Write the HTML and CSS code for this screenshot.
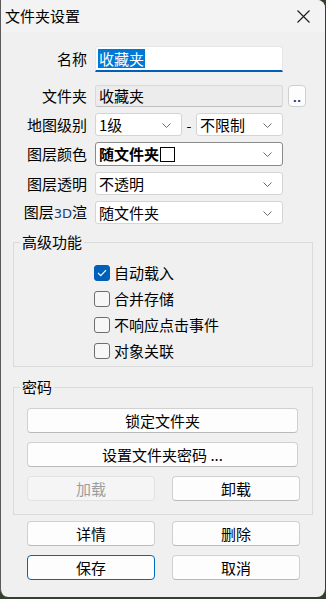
FILE: index.html
```html
<!DOCTYPE html>
<html lang="zh-CN">
<head>
    <meta charset="UTF-8">
    <title>文件夹设置</title>
    <link rel="stylesheet" href="styles.css">
</head>
<body>
    <div class="window">
        <div class="titlebar">
            <span class="title">文件夹设置</span>
            <svg class="close" width="13" height="13" viewBox="0 0 13 13"><path d="M0.5 0.5 L12.5 12.5 M12.5 0.5 L0.5 12.5" stroke="#1a1a1a" stroke-width="1.1" fill="none"/></svg>
        </div>
        <div class="content">
            <div class="form">
                <div class="row row-name">
                    <span class="lbl">名称</span>
                    <div class="field field-edit"><span class="selected">收藏夹</span></div>
                </div>
                <div class="row row-folder">
                    <span class="lbl">文件夹</span>
                    <div class="field field-readonly">收藏夹</div>
                    <button class="browse">..</button>
                </div>
                <div class="row row-combo">
                    <span class="lbl">地图级别</span>
                    <div class="combo combo-half">1级<svg class="chev" width="9" height="5" viewBox="0 0 9 5"><path d="M0.5 0.5 L4.5 4.5 L8.5 0.5" stroke="#6a6a6a" fill="none"/></svg></div>
                    <span class="dash">-</span>
                    <div class="combo combo-half">不限制<svg class="chev" width="9" height="5" viewBox="0 0 9 5"><path d="M0.5 0.5 L4.5 4.5 L8.5 0.5" stroke="#6a6a6a" fill="none"/></svg></div>
                </div>
                <div class="row row-color">
                    <span class="lbl">图层颜色</span>
                    <div class="combo combo-focus"><b>随文件夹</b><span class="swatch"></span><svg class="chev" width="9" height="5" viewBox="0 0 9 5"><path d="M0.5 0.5 L4.5 4.5 L8.5 0.5" stroke="#6a6a6a" fill="none"/></svg></div>
                </div>
                <div class="row row-combo">
                    <span class="lbl">图层透明</span>
                    <div class="combo">不透明<svg class="chev" width="9" height="5" viewBox="0 0 9 5"><path d="M0.5 0.5 L4.5 4.5 L8.5 0.5" stroke="#6a6a6a" fill="none"/></svg></div>
                </div>
                <div class="row row-combo">
                    <span class="lbl">图层<span class="latin">3D</span>渲</span>
                    <div class="combo">随文件夹<svg class="chev" width="9" height="5" viewBox="0 0 9 5"><path d="M0.5 0.5 L4.5 4.5 L8.5 0.5" stroke="#6a6a6a" fill="none"/></svg></div>
                </div>
            </div>

            <fieldset class="group group-advanced">
                <legend>高级功能</legend>
                <div class="checks">
                    <div class="check"><span class="box box-on"><svg width="10" height="8" viewBox="0 0 10 8"><path d="M1 4 L3.8 6.6 L9 1.2" stroke="#fff" stroke-width="1.2" fill="none"/></svg></span>自动载入</div>
                    <div class="check"><span class="box"></span>合并存储</div>
                    <div class="check"><span class="box"></span>不响应点击事件</div>
                    <div class="check"><span class="box"></span>对象关联</div>
                </div>
            </fieldset>

            <fieldset class="group group-password">
                <legend>密码</legend>
                <div class="stack">
                    <button class="btn btn-wide">锁定文件夹</button>
                    <button class="btn btn-wide">设置文件夹密码 ...</button>
                    <div class="pair">
                        <button class="btn btn-disabled">加载</button>
                        <button class="btn">卸载</button>
                    </div>
                </div>
            </fieldset>

            <div class="pair pair-bottom">
                <button class="btn">详情</button>
                <button class="btn">删除</button>
            </div>
            <div class="pair pair-bottom">
                <button class="btn btn-default">保存</button>
                <button class="btn">取消</button>
            </div>
        </div>
    </div>
</body>
</html>
```

FILE: styles.css
```css
html, body {
    margin: 0;
    padding: 0;
    background-color: #33402f;
    font-family: "Noto Sans CJK SC", "Noto Sans", sans-serif;
    color: #000000;
}

.window {
    width: 325px;
    height: 597px;
    background-color: #f0f0f0;
    border-radius: 0 8px 8px 8px;
    overflow: hidden;
    box-sizing: border-box;
    border-left: 1px solid #5a5a5a;
}

.titlebar {
    height: 32px;
    background-color: #f3f3f3;
    display: flex;
    align-items: center;
    justify-content: space-between;
    padding: 0 15px 0 4px;
}

.title {
    font-size: 15px;
    line-height: 18px;
    margin-top: -1px;
}

.close {
    display: block;
    margin-top: 1px;
}

.content {
    padding: 14px 12px 0 12px;
}

/* form rows */
.form {
    display: flex;
    flex-direction: column;
    gap: 6px;
}

.row {
    display: flex;
    align-items: center;
    height: 23px;
}

.row-name { height: 26px; }
.row-folder { height: 22px; margin-top: 7px; }
.row-color { height: 24px; }

.lbl {
    width: 74px;
    padding-right: 8px;
    text-align: right;
    font-size: 15px;
    line-height: 18px;
    white-space: nowrap;
}

.latin {
    font-family: "DejaVu Sans", sans-serif;
    font-size: 13px;
    color: #1f3a7a;
}

.field, .combo {
    width: 188px;
    height: 100%;
    box-sizing: border-box;
    font-size: 15px;
    line-height: 18px;
    display: flex;
    align-items: center;
    padding-left: 3px;
}

.field-edit {
    background-color: #ffffff;
    border: 1px solid #e6e6e6;
    border-bottom: 2px solid #005fb8;
    border-radius: 3px 3px 0 0;
    padding-left: 2px;
}

.selected {
    background-color: #0078d7;
    color: #ffffff;
    padding: 0 1px;
    line-height: 19px;
}

.field-readonly {
    background-color: #ececec;
    border: 1px solid #d9d9d9;
    border-bottom-color: #bdbdbd;
    border-radius: 3px;
}

.browse {
    width: 18px;
    height: 22px;
    margin-left: 5px;
    padding: 0;
    background-color: #fdfdfd;
    border: 1px solid #cfcfcf;
    border-radius: 4px;
    font-family: "DejaVu Sans", sans-serif;
    font-size: 11px;
    font-weight: bold;
    color: #1e3f80;
    line-height: 26px;
}

.combo {
    position: relative;
    background-color: #ffffff;
    border: 1px solid #d4d4d4;
    border-radius: 3px;
}

.combo-half {
    width: 87px;
}

.combo-focus {
    border-color: #8a8a8a;
}

.combo b {
    font-weight: bold;
}

.swatch {
    width: 13px;
    height: 13px;
    border: 1px solid #000000;
    background-color: #ffffff;
    margin-left: 1px;
}

.chev {
    position: absolute;
    right: 10px;
    top: 50%;
    margin-top: -2px;
}

.dash {
    width: 14px;
    text-align: center;
    font-size: 14px;
}

/* groups */
.group {
    margin: 9px 0 0 0;
    padding: 0;
    border: 1px solid #dadada;
    border-radius: 0;
    width: 300px;
    box-sizing: border-box;
}

.group legend {
    font-size: 15px;
    line-height: 18px;
    padding: 0 2px;
    margin-left: 6px;
}

.checks {
    padding: 9px 0 2px 80px;
}

.check {
    display: flex;
    align-items: center;
    height: 26px;
    font-size: 15px;
    line-height: 18px;
}

.box {
    width: 16px;
    height: 16px;
    box-sizing: border-box;
    border: 1px solid #6e6e6e;
    border-radius: 3px;
    background-color: #f7f7f7;
    margin-right: 4px;
    display: flex;
    align-items: center;
    justify-content: center;
}

.box-on {
    background-color: #005fb8;
    border-color: #005fb8;
}

.group-password {
    margin-top: 11px;
}

.stack {
    padding: 12px 14px 13px 13px;
    display: flex;
    flex-direction: column;
    gap: 9px;
}

/* buttons */
.btn {
    height: 25px;
    box-sizing: border-box;
    background-color: #fdfdfd;
    border: 1px solid #d0d0d0;
    border-bottom-color: #bababa;
    border-radius: 4px;
    font-family: "Noto Sans CJK SC", "Noto Sans", sans-serif;
    font-size: 15px;
    line-height: 18px;
    color: #000000;
    padding: 0;
}

.btn-wide {
    width: 100%;
}

.btn-disabled {
    background-color: #f5f5f5;
    border-color: #e2e2e2;
    color: #9d9d9d;
}

.btn-default {
    border: 1px solid #0067c0;
}

.pair {
    display: grid;
    grid-template-columns: 128px 128px;
    column-gap: 17px;
    margin-right: -3px;
}

.pair-bottom {
    margin: 6px 0 0 14px;
}

.pair-bottom + .pair-bottom {
    margin-top: 9px;
}
```
